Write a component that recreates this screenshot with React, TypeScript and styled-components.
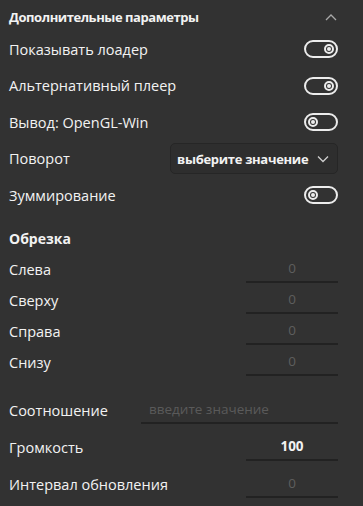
import React from "react";
import styled, { createGlobalStyle } from "styled-components";

const GlobalStyle = createGlobalStyle`
  html, body {
    margin: 0;
    padding: 0;
    background: #323232;
  }
  body {
    font-family: "Open Sans", "Noto Sans", sans-serif;
    color: #f2f2f2;
  }
`;

const Panel = styled.div`
  width: 363px;
  height: 506px;
  box-sizing: border-box;
  padding: 3px 25px 0 9px;
  background: #323232;
  overflow: hidden;
`;

const Header = styled.div`
  height: 28px;
  display: flex;
  align-items: center;
  justify-content: space-between;
  font-size: 13px;
  font-weight: 700;
  letter-spacing: -0.45px;
`;

const Row = styled.div<{ $h?: number }>`
  height: ${(p) => p.$h ?? 36.5}px;
  display: flex;
  align-items: center;
  justify-content: space-between;
  font-size: 14.5px;
`;

const SectionTitle = styled.div`
  margin-top: 10px;
  height: 30px;
  display: flex;
  align-items: center;
  font-size: 14px;
  font-weight: 700;
`;

const Spacer = styled.div<{ $h: number }>`
  height: ${(p) => p.$h}px;
`;

const Track = styled.div<{ $on?: boolean }>`
  width: 34px;
  height: 18px;
  box-sizing: border-box;
  border: 2px solid #ececec;
  border-radius: 9px;
  display: flex;
  align-items: center;
  justify-content: ${(p) => (p.$on ? "flex-end" : "flex-start")};
  padding: 0 2px;
`;

const Knob = styled.div`
  width: 10px;
  height: 10px;
  box-sizing: border-box;
  border: 2px solid #ececec;
  border-radius: 50%;
  display: flex;
  align-items: center;
  justify-content: center;
  &::after {
    content: "";
    width: 4px;
    height: 4px;
    border-radius: 50%;
    background: #ececec;
  }
`;

const Select = styled.div`
  width: 168px;
  height: 31px;
  box-sizing: border-box;
  border: 1px solid #262626;
  border-radius: 5px;
  background: #2e2e2e;
  display: flex;
  align-items: center;
  justify-content: space-between;
  padding: 0 8px 0 6px;
  font-size: 13px;
  font-weight: 700;
  letter-spacing: -0.3px;
`;

const Field = styled.input<{ $w: number; $align?: string; $bold?: boolean }>`
  width: ${(p) => p.$w}px;
  height: 28px;
  box-sizing: border-box;
  background: transparent;
  border: none;
  border-bottom: 2px solid #222;
  outline: none;
  padding: 0 8px;
  font-family: inherit;
  font-size: 13.5px;
  text-align: ${(p) => p.$align ?? "center"};
  font-weight: ${(p) => (p.$bold ? 700 : 400)};
  color: ${(p) => (p.$bold ? "#f2f2f2" : "#5e5e5e")};
  &::placeholder {
    color: #5a5a5a;
  }
`;

const Toggle = ({ on }: { on?: boolean }) => (
  <Track $on={on}>
    <Knob />
  </Track>
);

const Chevron = ({ up, color }: { up?: boolean; color: string }) => (
  <svg width="12" height="8" viewBox="0 0 12 8" style={{ marginRight: up ? 1 : 0 }}>
    <path
      d={up ? "M1 7 L6 2 L11 7" : "M1 1.5 L6 6.5 L11 1.5"}
      fill="none"
      stroke={color}
      strokeWidth="1.3"
    />
  </svg>
);

const crops = ["Слева", "Сверху", "Справа", "Снизу"];

export default function App() {
  return (
    <>
      <GlobalStyle />
      <Panel>
        <Header>
          Дополнительные параметры
          <Chevron up color="#a8a8a8" />
        </Header>
        <Row>
          Показывать лоадер
          <Toggle on />
        </Row>
        <Row>
          Альтернативный плеер
          <Toggle on />
        </Row>
        <Row>
          Вывод: OpenGL-Win
          <Toggle />
        </Row>
        <Row>
          Поворот
          <Select>
            выберите значение
            <Chevron color="#cfcfcf" />
          </Select>
        </Row>
        <Row>
          Зуммирование
          <Toggle />
        </Row>
        <SectionTitle>Обрезка</SectionTitle>
        {crops.map((c) => (
          <Row key={c} $h={31}>
            {c}
            <Field $w={92} defaultValue="0" />
          </Row>
        ))}
        <Spacer $h={14} />
        <Row $h={37}>
          Соотношение
          <Field $w={197} $align="left" placeholder="введите значение" />
        </Row>
        <Row $h={37}>
          Громкость
          <Field $w={92} $bold defaultValue="100" />
        </Row>
        <Row $h={37}>
          Интервал обновления
          <Field $w={92} defaultValue="0" />
        </Row>
      </Panel>
    </>
  );
}
